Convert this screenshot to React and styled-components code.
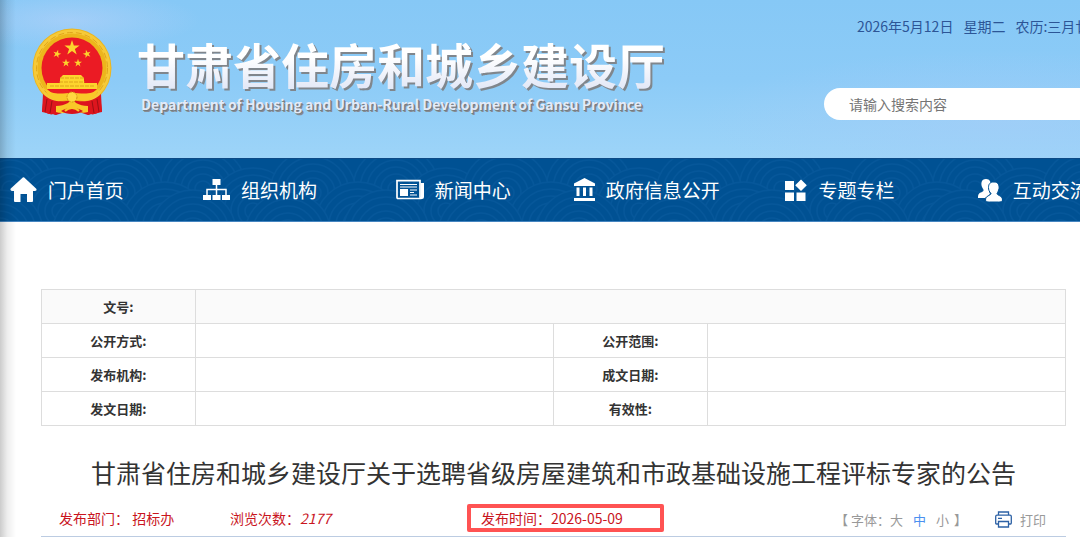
import styled, { createGlobalStyle } from "styled-components";

const GlobalStyle = createGlobalStyle`
  * {
    box-sizing: border-box;
  }

  body {
    margin: 0;
    background: #fff;
    color: #333;
    font-family: "Noto Sans CJK SC", sans-serif;
    font-size: 13px;
    line-height: 20px;
  }

  button, input {
    font-family: inherit;
  }
`;

const Page = styled.div`
  position: relative;
  overflow: hidden;

  &::after {
    content: "";
    position: absolute;
    top: 0;
    left: 0;
    bottom: 0;
    width: 16px;
    background: linear-gradient(
      to right,
      rgba(0, 0, 0, 0.2),
      rgba(0, 0, 0, 0.07) 45%,
      rgba(0, 0, 0, 0)
    );
    pointer-events: none;
  }
`;

const Header = styled.header`
  display: flex;
  justify-content: space-between;
  height: 158px;
  padding-left: 32px;
  background:
    radial-gradient(ellipse 130px 30px at 70px 20px, rgba(190, 212, 250, 0.5), transparent),
    radial-gradient(ellipse 300px 70px at 1000px 120px, rgba(165, 205, 248, 0.6), transparent),
    linear-gradient(to bottom, #86c8f6, #8ccbf7 50%, #9dd4f8);
`;

const Brand = styled.div`
  flex: none;
  display: flex;
  align-items: flex-start;
  gap: 25px;
  padding-top: 28px;
`;

const BrandText = styled.div`
  padding-top: 5px;
  white-space: nowrap;
`;

const SiteName = styled.h1`
  margin: 0;
  font-size: 48px;
  line-height: 60px;
  font-weight: 700;
  color: transparent;
  background: linear-gradient(to bottom, #fff 40%, #e4e9f7 90%);
  background-clip: text;
  filter: drop-shadow(2px 2px 0 #80868c);
`;

const SiteNameEn = styled.p`
  margin: 0;
  padding: 2px 0 0 4px;
  font-size: 14px;
  line-height: 18px;
  font-weight: 700;
  color: #e2eaf8;
  text-shadow: 1px 1px 0 #777b80, 2px 2px 0 #868c94;
`;

const HeaderTools = styled.div`
  flex: 0 0 256px;
  min-width: 0;
  white-space: nowrap;
`;

const Today = styled.div`
  display: flex;
  gap: 10px;
  padding: 16px 0 0 33px;
  font-size: 14px;
  color: #2c5596;
`;

const SearchForm = styled.form`
  margin-top: 52px;
`;

const SearchInput = styled.input`
  width: 360px;
  height: 32px;
  padding: 0 25px;
  border: 0;
  border-radius: 16px;
  outline: none;
  background: #fff;
  font-size: 14px;
  color: #333;

  &::placeholder {
    color: #757575;
  }
`;

const Nav = styled.nav`
  position: relative;
  border-top: 1px solid #0d4a86;
  border-bottom: 1px solid #4585c0;
  background: #005193;
`;

const NavWaves = styled.svg`
  position: absolute;
  inset: 0;
  width: 100%;
  height: 100%;
`;

const NavList = styled.ul`
  position: relative;
  display: grid;
  grid-template-columns: repeat(6, 1fr);
  margin: 0 -50px 0 -30px;
  padding: 0;
  list-style: none;
`;

const NavLink = styled.a`
  display: flex;
  align-items: center;
  justify-content: center;
  gap: 11px;
  height: 62px;
  font-size: 19px;
  line-height: 28px;
  color: #fff;
  text-decoration: none;
  white-space: nowrap;

  & svg {
    flex: none;
    fill: currentColor;
  }
`;

const Main = styled.main`
  padding: 67px 14px 0 41px;
`;

const InfoTable = styled.table`
  width: 100%;
  border-collapse: collapse;
  table-layout: fixed;
`;

const LabelCol = styled.col`
  width: 15%;
`;

const ValueCol = styled.col`
  width: 35%;
`;

const InfoRow = styled.tr`
  height: 34px;
  background: ${(props) => (props.$shaded ? "#fafafa" : "#fff")};
`;

const Label = styled.th`
  padding: 0;
  border: 1px solid #ddd;
  text-align: center;
  font-weight: 700;
`;

const Value = styled.td`
  padding: 0 10px;
  border: 1px solid #ddd;
`;

const ArticleTitle = styled.h2`
  margin: 26px 0 0;
  font-size: 25px;
  line-height: 40px;
  font-weight: 400;
  text-align: center;
  white-space: nowrap;
`;

const Meta = styled.div`
  display: grid;
  grid-template-columns: 171px 237px 197px 1fr;
  align-items: center;
  margin-top: 12px;
  padding: 0 20px 4px 18px;
  border-bottom: 1px solid #bccce2;
  font-size: 14px;
  color: #c9151e;
  white-space: nowrap;
`;

const Published = styled.div`
  height: 28px;
  padding: 0 10px;
  border: 4px solid #ff5353;
  border-radius: 2px;
`;

const Tools = styled.div`
  display: flex;
  align-items: center;
  justify-content: flex-end;
  gap: 28px;
  padding-top: 3px;
  font-size: 13px;
  color: #999;
`;

const FontSizes = styled.div`
  display: flex;
`;

const SizeButtons = styled.div`
  display: flex;
  gap: 10px;
  padding-right: 5px;
`;

const ToolButton = styled.button`
  display: flex;
  align-items: center;
  gap: 8px;
  padding: 0;
  border: 0;
  background: none;
  font-size: 13px;
  line-height: 20px;
  color: ${(props) => (props.$active ? "#4a90f0" : "#999")};
  cursor: pointer;
`;

const STAR = "M0-10 2.3-3.1H9.5L3.6 1.2 5.9 8.1 0 3.8-5.9 8.1-3.6 1.2-9.5-3.1H-2.3Z";

function Emblem() {
  return (
    <svg width="80" height="88" viewBox="0 0 80 88" aria-hidden="true">
      <path d="M13 58 10 84c4 0 6 3 11 2l3 1 9-3h14l9 3 3-1c5 1 7-2 11-2l-3-26Z" fill="#d5101b" />
      <path d="m14 67-2 16M19 70l-2 15M61 70l3 15M66 67l3 16" stroke="#950d12" fill="none" />
      <circle cx="40" cy="40" r="39.5" fill="#edb51c" />
      <circle cx="40" cy="40" r="36.5" fill="none" stroke="#f6ca38" strokeWidth="4" />
      <circle cx="40" cy="40" r="35.5" fill="none" stroke="#e0a51c" strokeWidth="1" strokeDasharray="6 3" />
      <circle cx="40" cy="40" r="30.5" fill="#eb1b24" />
      <g fill="#fdd52d">
        <path d={STAR} transform="translate(40 20) scale(.8)" />
        <path d={STAR} transform="translate(25 26) rotate(15) scale(.43)" />
        <path d={STAR} transform="translate(55 26) rotate(-15) scale(.43)" />
        <path d={STAR} transform="translate(34 35) scale(.42)" />
        <path d={STAR} transform="translate(46 35) scale(.42)" />
        <path d="M31 47h18l3 3v5h13v6H15v-6h13v-5Z" />
      </g>
      <path d="M28 50h24M27 54h26M18 58h44" stroke="#d79715" strokeWidth=".8" strokeDasharray="4 1" />
      <path d="M15 61h50l-8 7H23Z" fill="#eb1b24" />
      <path d="M13 60c7 8 18 5 27 5s20 3 27-5c-3 12-14 15-20 12h-14c-7 3-17 0-20-12Z" fill="#f9c928" />
      <path d="M11 66c9 9 20 8 29 6 9 2 20 3 29-6l1 18c-4 0-6 3-11 2l-3 1-5-9H29l-5 9-3-1c-5 1-7-2-11-2Z" fill="#dd151e" />
      <path d="m15 71-2 13M20 73l-2 12M60 73l2 12M65 71l2 13" stroke="#9c0f14" fill="none" />
      <path d="M24 78c5 0 8-1 12-3l4-4 4 4c4 2 7 3 12 3v6c-6 2-10-1-16 0s-10 2-16 0Z" fill="#f9c928" />
      <circle cx="40" cy="69" r="5" fill="#ffd940" stroke="#d69314" strokeDasharray="2 1" />
      <path d="M29 83c6-4 16-4 22 0-5 4-17 4-22 0Z" fill="#d9111b" />
      <path d="M33 83c4-4 10-4 14 0" fill="none" stroke="#f9c928" strokeWidth="2" />
    </svg>
  );
}

function HomeIcon() {
  return (
    <svg width="27" height="26" viewBox="0 0 27 26">
      <path d="M12 1.2q1.5-1.7 3 0l11 10.3q1 1 .2 2.1-.8.8-2.1.3H23V24q0 1-1 1h-5v-8h-6.500v8H5q-1 0-1-1V13.900H2.500Q1 14 .5 13q-.3-1 .5-1.700Z" />
    </svg>
  );
}

function OrgIcon() {
  return (
    <svg width="27" height="26" viewBox="0 0 27 26">
      <path d="M9.500 2h8v6h-8zM0 18h8v5H0zM9.500 18h8v5h-8zM19 18h8v5h-8z" />
      <path d="M13.500 8v10M4 18v-5.500h19V18" fill="none" stroke="#fff" strokeWidth="1.500" />
    </svg>
  );
}

function NewsIcon() {
  return (
    <svg width="28" height="26" viewBox="0 0 28 26">
      <path d="M24.500 6H28v14q0 2-2 2h-3l1.500-2Z" />
      <path d="M1 3.700h23V20q0 1.500 1.500 1.500H2Q1 21.500 1 20.500Z" fill="none" stroke="#fff" strokeWidth="1.700" />
      <path d="M4 12h8v7H4z" />
      <path d="M4 7.500h17M4 10h17M14 13h7M14 15.500h4M14 18h7" fill="none" stroke="#fff" />
    </svg>
  );
}

function GovIcon() {
  return (
    <svg width="21" height="26" viewBox="0 0 21 26">
      <path d="M10.500 1 21 6.500V9H0V6.500ZM2.500 10.500h3V19h-3zM9 10.500h3V19H9zM15.500 10.500h3V19h-3zM0 21h21v3H0z" />
    </svg>
  );
}

function TopicsIcon() {
  return (
    <svg width="22" height="26" viewBox="0 0 22 26">
      <path d="M0 4h9v9H0zM0 15.500h9V24H0zM11.500 15.500h9V24h-9zM16 2.500l5.800 5.700L16 14l-5.800-5.800Z" />
    </svg>
  );
}

function PeopleIcon() {
  return (
    <svg width="24" height="26" viewBox="0 0 24 26">
      <path d="M8 2c4 0 5 3 4.500 7L11 14l1 3-5 4H0c0-4 1-5 4-6 2-1 2-2 .5-4C2.500 7 3 2 8 2Z" />
      <path
        d="M16 5c4 0 5.500 3 5 6.500-.3 2-1.500 4-2 5 0 2 5.500 2 5.500 6.500 0 2-2 2-4 2h-9c-2 0-4 0-4-2 0-4.500 5.500-4.500 5.500-6.500-2-2-2.500-4-2.500-6C10.500 7 12 5 16 5Z"
        stroke="#005193"
        strokeWidth="1"
      />
    </svg>
  );
}

function PrintIcon() {
  return (
    <svg width="17" height="17" viewBox="0 0 17 17" fill="none" stroke="#2d61a5" strokeWidth="1.300">
      <path d="M3.500 4V1h10v3M3.500 13H1.500Q.7 13 .7 12V5.500q0-1.300 1.300-1.300h13q1.300 0 1.300 1.300V12q0 1-.8 1h-2M3.500 10.500h10V16h-10zM3 7.300h4" />
    </svg>
  );
}

const radii = [8, 15, 22, 29, 36, 43];

function Waves() {
  return (
    <NavWaves aria-hidden="true">
      <defs>
        <pattern id="waves" width="193" height="62" patternUnits="userSpaceOnUse">
          <g fill="#005193" stroke="#06579a" strokeWidth="1.500">
            {[[10, 30], [203, 30], [60, 52], [120, 34], [165, 66], [95, 76], [0, 74], [193, 74]].map(([x, y]) =>
              [...radii].reverse().map((r) => <circle key={`${x}-${y}-${r}`} cx={x} cy={y} r={r} />)
            )}
          </g>
        </pattern>
      </defs>
      <rect width="100%" height="100%" fill="url(#waves)" />
    </NavWaves>
  );
}

const navItems = [
  { text: "门户首页", Icon: HomeIcon },
  { text: "组织机构", Icon: OrgIcon },
  { text: "新闻中心", Icon: NewsIcon },
  { text: "政府信息公开", Icon: GovIcon },
  { text: "专题专栏", Icon: TopicsIcon },
  { text: "互动交流", Icon: PeopleIcon },
];

const infoRows = [
  ["公开方式:", "公开范围:"],
  ["发布机构:", "成文日期:"],
  ["发文日期:", "有效性:"],
];

const fontSizes = ["大", "中", "小"];

function App() {
  return (
    <Page>
      <GlobalStyle />
      <Header>
        <Brand>
          <Emblem />
          <BrandText>
            <SiteName>甘肃省住房和城乡建设厅</SiteName>
            <SiteNameEn>Department of Housing and Urban-Rural Development of Gansu Province</SiteNameEn>
          </BrandText>
        </Brand>
        <HeaderTools>
          <Today>
            <span>2026年5月12日</span>
            <span>星期二</span>
            <span>农历:三月廿六</span>
          </Today>
          <SearchForm role="search">
            <SearchInput type="text" aria-label="请输入搜索内容" placeholder="请输入搜索内容" />
          </SearchForm>
        </HeaderTools>
      </Header>

      <Nav>
        <Waves />
        <NavList>
          {navItems.map(({ text, Icon }) => (
            <li key={text}>
              <NavLink href="#">
                <Icon />
                {text}
              </NavLink>
            </li>
          ))}
        </NavList>
      </Nav>

      <Main>
        <InfoTable>
          <colgroup>
            <LabelCol />
            <ValueCol />
            <LabelCol />
            <ValueCol />
          </colgroup>
          <tbody>
            <InfoRow $shaded>
              <Label scope="row">文号:</Label>
              <Value colSpan={3} />
            </InfoRow>
            {infoRows.map(([left, right]) => (
              <InfoRow key={left}>
                <Label scope="row">{left}</Label>
                <Value />
                <Label scope="row">{right}</Label>
                <Value />
              </InfoRow>
            ))}
          </tbody>
        </InfoTable>

        <ArticleTitle>甘肃省住房和城乡建设厅关于选聘省级房屋建筑和市政基础设施工程评标专家的公告</ArticleTitle>

        <Meta>
          <div>发布部门： 招标办</div>
          <div>
            浏览次数：<em>2177</em>
          </div>
          <Published>发布时间：2026-05-09</Published>
          <Tools>
            <FontSizes>
              <span>【 字体：</span>
              <SizeButtons>
                {fontSizes.map((size) => (
                  <ToolButton key={size} type="button" $active={size === "中"}>
                    {size}
                  </ToolButton>
                ))}
              </SizeButtons>
              <span>】</span>
            </FontSizes>
            <ToolButton type="button">
              <PrintIcon />
              打印
            </ToolButton>
          </Tools>
        </Meta>
      </Main>
    </Page>
  );
}

export default App;
